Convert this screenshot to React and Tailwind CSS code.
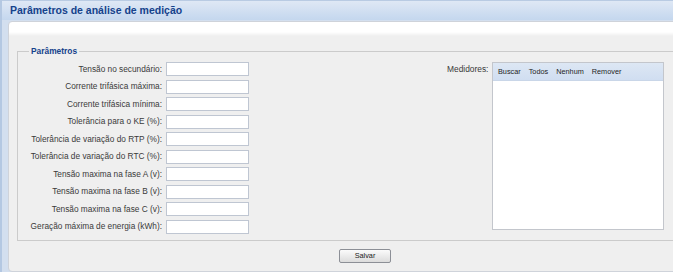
export default function App() {
  const rows = [
    "Tensão no secundário:",
    "Corrente trifásica máxima:",
    "Corrente trifásica mínima:",
    "Tolerância para o KE (%):",
    "Tolerância de variação do RTP (%):",
    "Tolerância de variação do RTC (%):",
    "Tensão maxima na fase A (v):",
    "Tensão maxima na fase B (v):",
    "Tensão maxima na fase C (v):",
    "Geração máxima de energia (kWh):",
  ];
  return (
    <div className="w-[673px] h-[272px] overflow-hidden flex flex-col bg-[#d3dfef] border-l-[2px] border-[#b4c8e2] font-['Liberation_Sans',Arial,sans-serif]">
      <div className="h-[20px] shrink-0 flex items-center pl-[8px] bg-gradient-to-b from-[#dfe8f5] to-[#c4d7ee] border-t border-[#b9cbe3]">
        <span className="text-[10.5px] font-bold text-[#15428b] leading-none">Parâmetros de análise de medição</span>
      </div>
      <div className="flex-1 flex pt-[1px] pl-[6px] min-h-0">
        <div className="w-[720px] shrink-0 h-full border border-[#cfd3da] rounded-tl-[4px] rounded-bl-[4px] bg-[linear-gradient(#ffffff_0px,#ffffff_10px,#efefef_14px)] flex flex-col">
          <fieldset className="mt-[24px] ml-[8px] mr-[8px] border border-[#cbcbcb] pt-[5px] pb-[6px]">
            <legend className="ml-[11px] px-[2px] text-[8.4px] font-bold text-[#15428b] leading-[11px]">Parâmetros</legend>
            <div className="flex items-start">
              <div className="flex flex-col gap-[3.5px]">
                {rows.map((r) => (
                  <div key={r} className="flex items-center h-[14px]">
                    <span className="w-[144px] text-right text-[8.3px] text-[#3a3a3a] leading-none whitespace-nowrap">{r}</span>
                    <div className="ml-[4px] w-[83px] h-[14px] bg-white border border-[#bfc6d2]"></div>
                  </div>
                ))}
              </div>
              <div className="ml-[198px] w-[42px] pt-[3px] text-[8.4px] text-[#3a3a3a] leading-none whitespace-nowrap">Medidores:</div>
              <div className="ml-[3px] w-[172px] h-[168px] bg-white border border-[#c3c6cc] flex flex-col">
                <div className="h-[18px] flex items-center gap-[8px] pl-[5px] bg-gradient-to-b from-[#dde7f4] to-[#d0def1] border-b border-[#c9d6e8] text-[7.3px] text-[#1e1e1e] leading-none">
                  <span>Buscar</span>
                  <span>Todos</span>
                  <span>Nenhum</span>
                  <span>Remover</span>
                </div>
              </div>
            </div>
          </fieldset>
          <div className="mt-[8px] ml-[330px]">
            <button className="w-[52px] h-[14px] flex items-center justify-center border border-[#8c8f96] rounded-[2px] bg-gradient-to-b from-[#fbfbfb] to-[#dcdcdc] text-[7.3px] text-[#222] leading-none">
              Salvar
            </button>
          </div>
        </div>
      </div>
    </div>
  );
}
